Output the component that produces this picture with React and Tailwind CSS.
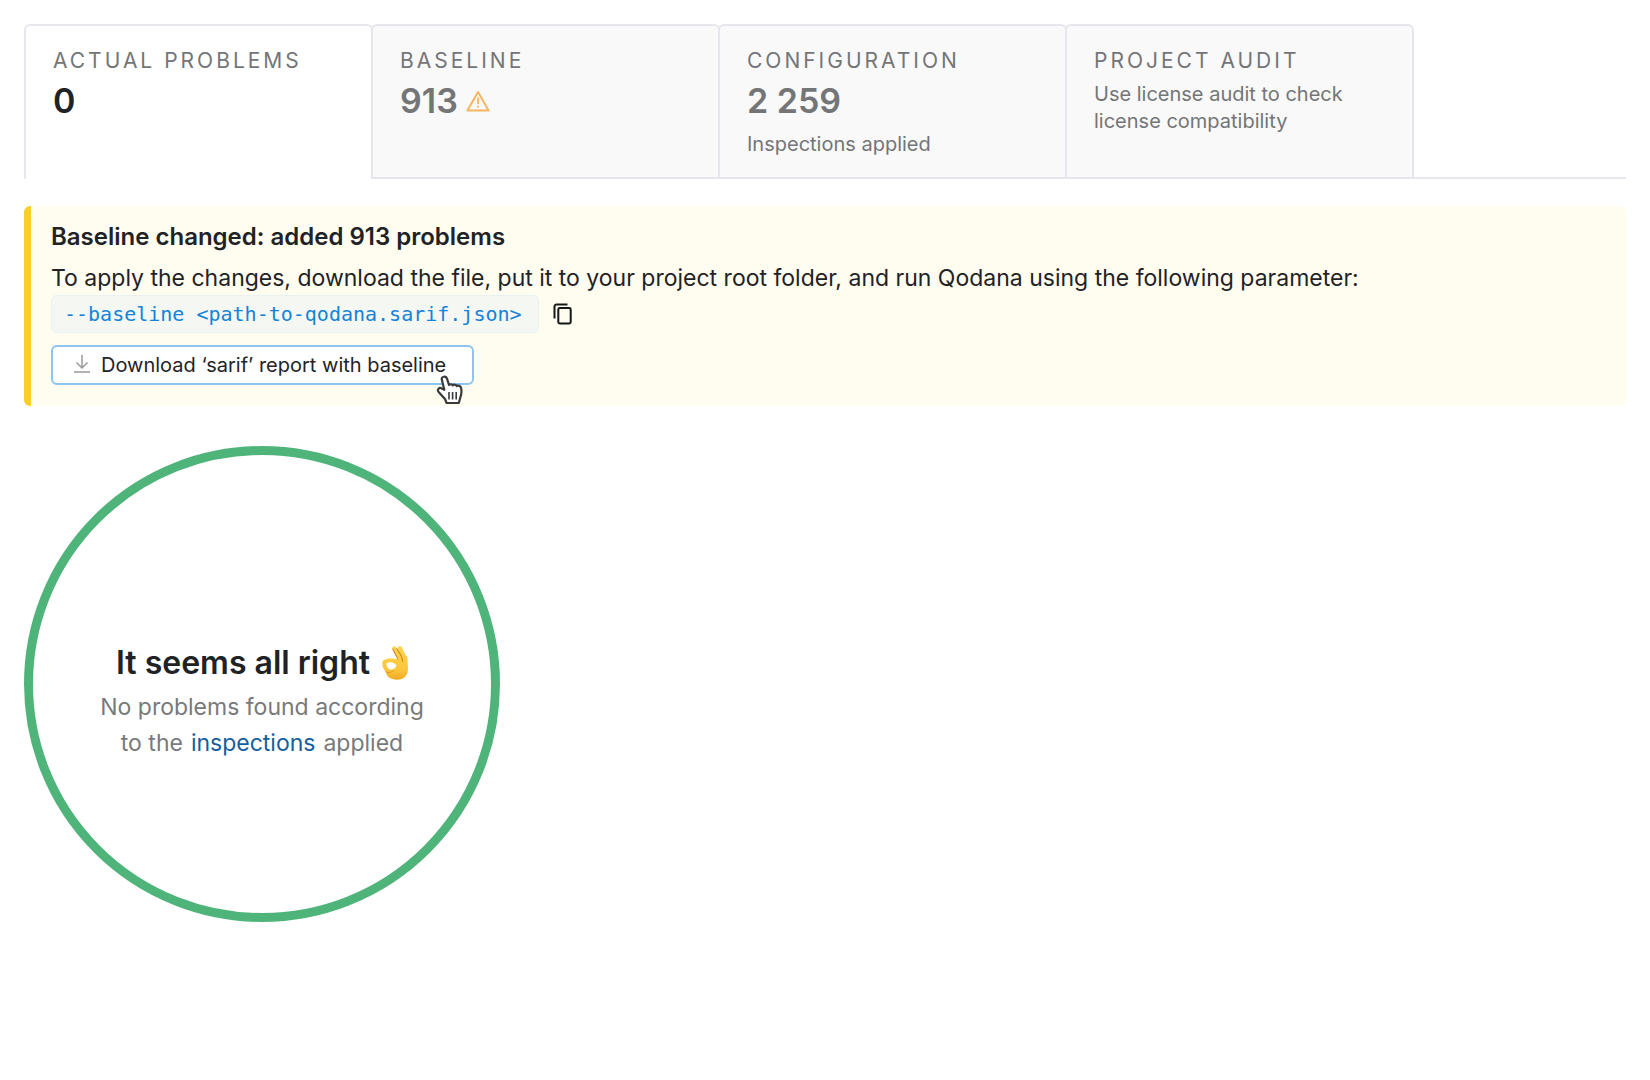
import React from 'react';

const tabs = [
  { id: 'problems', label: 'Actual problems', value: '0' },
  { id: 'baseline', label: 'Baseline', value: '913', warning: true },
  { id: 'configuration', label: 'Configuration', value: '2 259', note: 'Inspections applied' },
  { id: 'audit', label: 'Project audit', text: 'Use license audit to check license compatibility' },
];

const WarningIcon = () => (
  <svg className="w-6 h-6" viewBox="0 0 24 24" fill="none" stroke="#f5b565" strokeLinejoin="round">
    <path d="M12 3 22.6 21.4H1.4Z" strokeWidth="2" />
    <path d="M12 8.6v6.6M12 16.8v1.8" strokeWidth="1.8" />
  </svg>
);

const DownloadIcon = () => (
  <svg className="w-5 h-5" viewBox="0 0 20 20" fill="none" stroke="#9a9a9a" strokeWidth="1.5">
    <path d="M9 0v13M3.5 7.5 9 13l5.5-5.5M1 17h16" />
  </svg>
);

const CopyIcon = () => (
  <svg className="w-6 h-6" viewBox="0 0 24 24" fill="none" stroke="#151719" strokeWidth="2">
    <path d="M3.5 16.5V4.5a2 2 0 0 1 2-2H16.5" />
    <rect x="7.3" y="6" width="12.4" height="15.4" rx="1.4" />
  </svg>
);

const OkHand = () => (
  <svg className="w-[26px] h-[34px]" viewBox="0 0 77 101" role="img" aria-label="OK hand">
    <defs>
      <linearGradient id="skin" x1="0" y1="0" x2="0" y2="1">
        <stop offset="0" stopColor="#ffd34d" />
        <stop offset="0.7" stopColor="#fcc63c" />
        <stop offset="1" stopColor="#f0aa24" />
      </linearGradient>
    </defs>
    <path
      d="M31 8C29 0 38-1 42 4L52 18 47 8C45 0 55-2 60 5L69 25C73 28 76 33 76 40L77 68C77 90 62 101 42 100 22 99 13 90 11 76 3 68-1 56 1 48 4 37 26 34 47 40Z"
      fill="url(#skin)"
    />
    <path d="M13 52C22 46 36 48 43 58 39 68 31 70 24 70 17 68 12 60 13 52Z" fill="#fff" />
    <path d="M32 9 47 39M44 8 58 31 61 46" fill="none" stroke="#c9811f" strokeWidth="3" strokeLinecap="round" />
    <path d="M11 76C18 81 27 78 33 73" fill="none" stroke="#e39a1f" strokeWidth="3" strokeLinecap="round" />
  </svg>
);

const HandCursor = () => (
  <svg className="w-7 h-[30px]" viewBox="0 0 28 30" aria-hidden="true">
    <path
      d="M7.6 1.7C9.4 1.2 10.6 2.3 11.1 3.9L13 10C14 8.9 16 9 16.8 10.3 18 9.3 20 9.6 20.7 11 22.4 10.1 24.7 10.9 25.1 13 25.7 16 25.6 19.2 24.4 22.2L22.8 28H10.6L9 24 2.6 16.9C.9 14.8 3 12.2 5.3 13.2L8.3 14.8 5.9 5C5.4 3.4 6 2.1 7.6 1.7Z"
      fill="#fff"
      stroke="#3a3a3a"
      strokeWidth="2.2"
      strokeLinejoin="round"
    />
    <path d="M13 17v7.500M16.600 17v7.500M20.200 17v7.500" stroke="#3a3a3a" strokeWidth="1.6" />
  </svg>
);

const Tab = ({ tab, active }) => (
  <button
    type="button"
    role="tab"
    aria-selected={active}
    className={
      active
        ? 'flex flex-col items-start w-[349px] min-h-[155px] -mb-[2px] px-[27px] pt-[21px] text-left rounded-t-md border-2 border-b-0 border-[#e5e7ed] bg-white text-[#1f2326]'
        : 'flex flex-col items-start w-[349px] min-h-[153px] -ml-[2px] px-[27px] pt-[21px] text-left rounded-t-md border-2 border-b-0 border-[#e5e7ed] bg-[#f9f9f9] text-[#737577]'
    }
  >
    <span className="text-[21px] leading-7 tracking-[3px] uppercase text-[#737577]">{tab.label}</span>
    {tab.value && (
      <span className="flex items-center gap-2 mt-[6px] text-[34px] leading-10 font-semibold">
        {tab.value}
        {tab.warning && <WarningIcon />}
      </span>
    )}
    {tab.note && <span className="mt-[10px] text-[20px] leading-[27px]">{tab.note}</span>}
    {tab.text && <span className="mt-[6px] text-[20px] leading-[27px]">{tab.text}</span>}
  </button>
);

const BaselineBanner = () => (
  <section className="mt-[27px] pl-5 pr-6 pt-[15px] pb-[21px] rounded-md border-l-[7px] border-[#fccf24] bg-[#fffcf0]">
    <h2 className="text-[24px] leading-8 font-semibold">Baseline changed: added 913 problems</h2>
    <p className="mt-2 text-[23px] leading-[34px]">
      To apply the changes, download the file, put it to your project root folder, and run Qodana using the following
      parameter:
    </p>
    <div className="flex items-center gap-3">
      <code className="pl-3 pr-4 py-1 rounded-md border border-[#e9f1f3] bg-[#f4f7f2] font-['DejaVu_Sans_Mono',monospace] text-[20px] leading-7 text-[#1583d8]">
        --baseline &lt;path-to-qodana.sarif.json&gt;
      </code>
      <button type="button" aria-label="Copy parameter">
        <CopyIcon />
      </button>
    </div>
    <div className="relative mt-3 w-fit">
      <button
        type="button"
        className="flex items-center gap-2 h-10 pl-5 pr-[26px] rounded-md border-2 border-[#8ec5f0] bg-white text-[20px] leading-7"
      >
        <DownloadIcon />
        Download ‘sarif’ report with baseline
      </button>
      <div className="absolute right-[10px] -bottom-5">
        <HandCursor />
      </div>
    </div>
  </section>
);

const App = () => (
  <main className="min-h-screen p-6 bg-white font-['Inter',sans-serif] text-[#1f2326]">
    <div role="tablist" className="flex border-b-2 border-[#e5e7ed]">
      {tabs.map((tab, i) => (
        <Tab key={tab.id} tab={tab} active={i === 0} />
      ))}
    </div>

    <BaselineBanner />

    <section className="flex flex-col items-center justify-center size-[476px] mt-10 pt-9 rounded-full border-[9px] border-[#4fb47a] text-center">
      <h1 className="flex items-center gap-3 text-[32px] leading-10 font-semibold">
        It seems all right
        <OkHand />
      </h1>
      <p className="mt-[6px] text-[23px] leading-9 text-[#77797b]">No problems found according</p>
      <p className="flex gap-2 text-[23px] leading-9 text-[#77797b]">
        <span>to the</span>
        <a href="#inspections" className="text-[#13609f]">
          inspections
        </a>
        <span>applied</span>
      </p>
    </section>
  </main>
);

export default App;
